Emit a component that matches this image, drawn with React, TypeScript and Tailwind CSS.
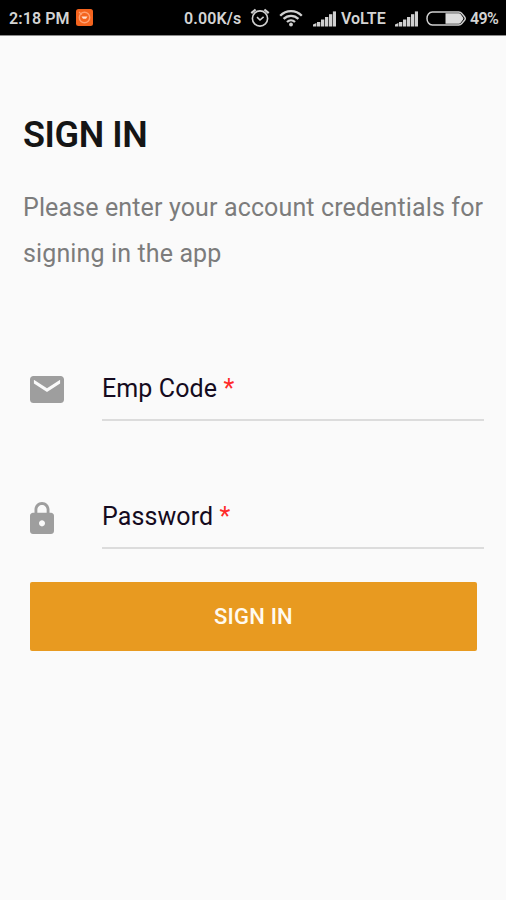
import type { ReactNode } from 'react'

function SignalIcon() {
  return (
    <svg className="h-4 w-[23px] shrink-0" viewBox="0 0 23 16" fill="#d0d0d0">
      <path d="M0 15.5v-2L3.4 12v3.5Z" />
      <rect x="4" y="11" width="3.3" height="4.5" />
      <rect x="8" y="8.5" width="3.3" height="7" />
      <rect x="12" y="6" width="3.3" height="9.5" />
      <rect x="16" y="3.2" width="3.3" height="12.3" />
      <rect x="19.9" y="0.4" width="3.1" height="15.1" />
    </svg>
  )
}

function AlarmIcon() {
  return (
    <svg className="h-5 w-5 shrink-0" viewBox="0 0 20 20" fill="none" stroke="#d0d0d0" strokeWidth="1.6">
      <circle cx="10" cy="10.5" r="7.6" />
      <path d="M1.3 5.2 5.6 1.5M18.7 5.2 14.4 1.5" strokeWidth="2.2" />
      <path d="M7 9.2 10 12l3.6-3.2" />
    </svg>
  )
}

function WifiIcon() {
  return (
    <svg className="h-[18px] w-6 shrink-0" viewBox="0 0 24 18" fill="none" stroke="#d0d0d0" strokeWidth="2.3">
      <path d="M1.2 6.7C7.2.6 16.8.6 22.8 6.7" />
      <path d="M4.6 9.9c4.2-4.1 10.6-4.1 14.8 0" />
      <path d="M8 13c2.3-2.2 5.7-2.2 8 0" />
      <circle cx="12" cy="15.5" r="1.9" fill="#d0d0d0" stroke="none" />
    </svg>
  )
}

function BatteryIcon() {
  return (
    <svg className="h-[15px] w-10 shrink-0" viewBox="0 0 41 15" preserveAspectRatio="none">
      <path
        d="M6.5 1h27c1.4 0 2.4.5 3.2 1.5l2.8 3.2c.8 1 .8 2.6 0 3.6l-2.8 3.2c-.8 1-1.8 1.5-3.2 1.5h-27C3.2 14 1 11 1 7.5S3.2 1 6.5 1Z"
        fill="none"
        stroke="#d0d0d0"
        strokeWidth="1.5"
      />
      <path d="M20 2.3h13.8c.6 0 1.2.3 1.6.8l2.6 3.4c.4.6.4 1.4 0 2l-2.6 3.4c-.4.5-1 .8-1.6.8H20Z" fill="#dcdcdc" />
    </svg>
  )
}

function AppBadge() {
  return (
    <svg className="ml-[6px] h-[17px] w-[17px] shrink-0" viewBox="0 0 17 17">
      <rect width="17" height="17" rx="2.5" fill="#f4641e" />
      <circle cx="8.5" cy="8.5" r="5.2" fill="none" stroke="#ffa070" strokeWidth="1.4" />
      <path d="M3 3 5.8 5.6" stroke="#ffa070" strokeWidth="1.2" />
      <path d="M5.5 7.6h6L10 9.8H7Z" fill="#ffe0cf" />
    </svg>
  )
}

function StatusBar() {
  return (
    <header className="flex h-9 items-center border-b border-[#8c8c8c] bg-black pl-[9px] text-base font-semibold text-[#d4d4d4]">
      <span className="w-[61px] whitespace-nowrap pt-[2px] tracking-[0.1px]">2:18 PM</span>
      <AppBadge />
      <span className="ml-[91px] w-[58px] whitespace-nowrap pt-[2px] tracking-[0.15px]">0.00K/s</span>
      <span className="ml-[8px] flex"><AlarmIcon /></span>
      <span className="ml-[9px] flex"><WifiIcon /></span>
      <span className="ml-[10px] flex pt-[2px]"><SignalIcon /></span>
      <span className="ml-[5px] w-[47px] whitespace-nowrap pt-[2px]">VoLTE</span>
      <span className="ml-[7px] flex pt-[2px]"><SignalIcon /></span>
      <span className="ml-[8px] flex pt-px"><BatteryIcon /></span>
      <span className="ml-[4px] whitespace-nowrap pt-[2px] tracking-[-0.6px]">49%</span>
    </header>
  )
}

function MailIcon() {
  return (
    <svg className="h-[27px] w-[34px]" viewBox="2 4 20 16" preserveAspectRatio="none" fill="#9e9e9e">
      <path d="M20 4H4c-1.1 0-2 .9-2 2v12c0 1.1.9 2 2 2h16c1.1 0 2-.9 2-2V6c0-1.1-.9-2-2-2zm-.3 4.4-7.7 5.1-7.7-5.1V6.2l7.7 5 7.7-5v2.2z" />
    </svg>
  )
}

function LockIcon() {
  return (
    <svg className="h-8 w-6" viewBox="4 1 16 21" preserveAspectRatio="none" fill="#9e9e9e">
      <path d="M18 8h-1V6c0-2.76-2.24-5-5-5S7 3.24 7 6v2H6c-1.1 0-2 .9-2 2v10c0 1.1.9 2 2 2h12c1.1 0 2-.9 2-2V10c0-1.1-.9-2-2-2zm-6 9c-1.1 0-2-.9-2-2s.9-2 2-2 2 .9 2 2-.9 2-2 2zm3.1-9H8.9V6c0-1.71 1.39-3.1 3.1-3.1s3.1 1.39 3.1 3.1v2z" />
    </svg>
  )
}

function Field({ icon, label }: { icon: ReactNode; label: string }) {
  return (
    <div className="flex h-[52px] pl-[30px] pr-[22px]">
      <div className="flex h-[41px] w-[72px] shrink-0 items-center">{icon}</div>
      <label className="flex-1 border-b-2 border-[#dcdcdc] text-[25px] leading-[40px] tracking-[0.1px] text-[#150b20]">
        {label} <span className="text-[#ff2a2a]">*</span>
      </label>
    </div>
  )
}

export default function App() {
  return (
    <div className="min-h-[900px] w-[506px] bg-[#fafafa] font-['Roboto',sans-serif]">
      <StatusBar />
      <main className="pt-[79px]">
        <h1 className="px-[23px] text-[36px] font-semibold leading-[40px] tracking-[-0.4px] text-[#151515]">SIGN IN</h1>
        <p className="mt-[30px] px-[23px] text-[25px] leading-[46px] tracking-[0.13px] whitespace-nowrap text-[#7c7c7c]">
          Please enter your account credentials for
          <br />
          signing in the app
        </p>
        <form className="mt-[92px]">
          <Field icon={<MailIcon />} label="Emp Code" />
          <div className="mt-[76px]">
            <Field icon={<LockIcon />} label="Password" />
          </div>
          <button
            type="button"
            className="mt-[33px] ml-[30px] block h-[69px] w-[447px] rounded-[2px] bg-[#e89a20] text-[22px] font-medium tracking-[0.2px] text-[#fffaf0]"
          >
            SIGN IN
          </button>
        </form>
      </main>
    </div>
  )
}
